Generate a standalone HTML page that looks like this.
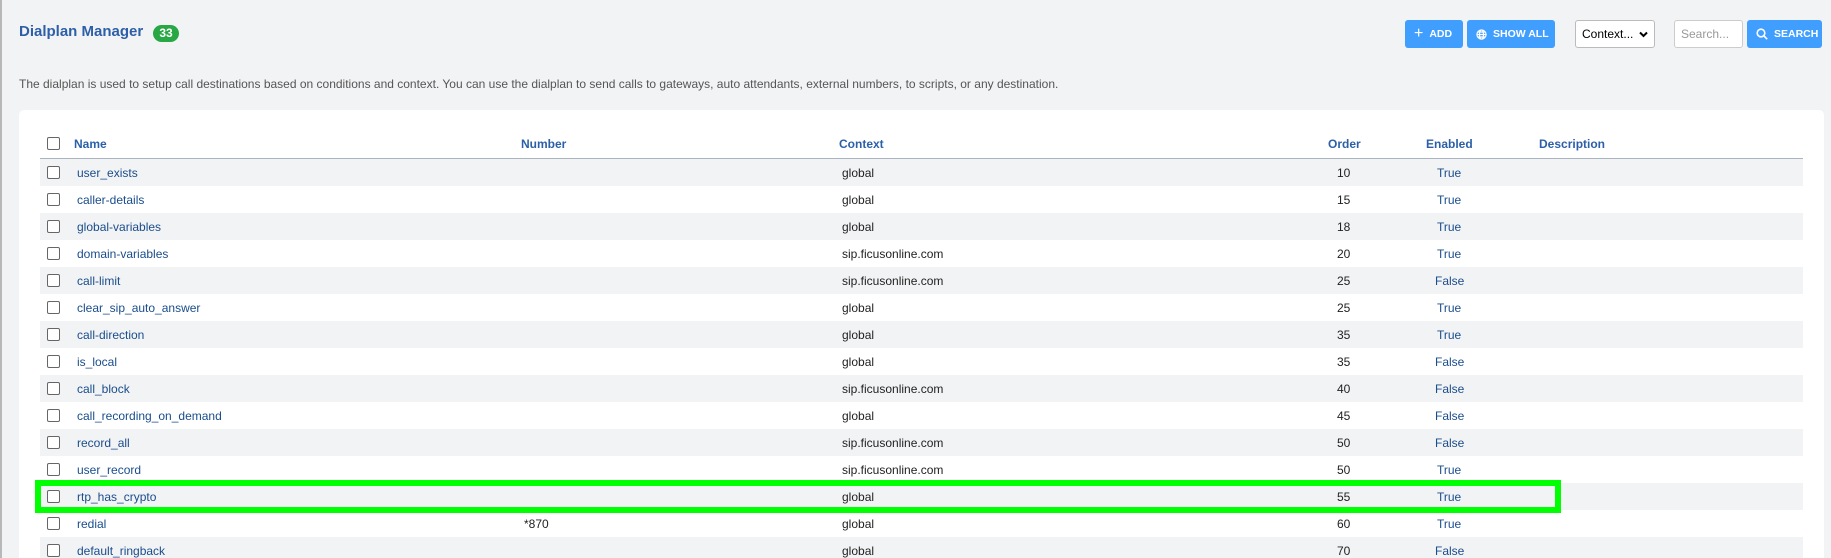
<!DOCTYPE html>
<html style="overflow:hidden;height:558px"><head><meta charset="utf-8"><style>
*{box-sizing:border-box;margin:0;padding:0}
body{width:1831px;height:558px;overflow:hidden;background:#f2f3f5;font-family:"Liberation Sans",sans-serif;position:relative}
.lb{position:absolute;left:0;top:0;width:2px;height:558px;background:#b8b8b8}
.title{position:absolute;left:19px;top:23px;font-size:15px;font-weight:bold;color:#2c5fa8}
.badge{position:absolute;left:153px;top:25px;width:26px;height:17px;border-radius:9px;background:#28a745;color:#fff;font-size:12px;font-weight:bold;text-align:center;line-height:17px}
.desc{position:absolute;left:19px;top:77px;font-size:12px;color:#555}
.btn{position:absolute;top:20px;height:28px;background:#409eff;border-radius:3px;color:#fff;font-size:10.5px;font-weight:bold;line-height:28px;display:flex;align-items:center;gap:6px;padding-left:9px}
.sel{position:absolute;left:1575px;top:20px;width:80px;height:28px;border:1px solid #bbb;border-radius:3px;background:#fff;font-size:12px;line-height:26px;padding-left:6px;color:#000}
.inp{position:absolute;left:1674px;top:20px;width:69px;height:28px;border:1px solid #ccc;border-radius:3px;background:#fff;font-size:12px;line-height:26px;padding-left:6px;color:#999}
.card{position:absolute;left:19px;top:110px;width:1805px;height:448px;background:#fff;border-radius:5px 5px 0 0}
.row{position:absolute;left:40px;width:1763px;height:27px;font-size:12px;color:#1a4d8c}
.row.s{background:#f2f3f5}
.row span{position:absolute;top:7px}
.cb{position:absolute;left:7px;top:7px;width:13px;height:13px;border:1px solid #666;border-radius:2px;background:#fff}
.hd{position:absolute;top:137px;font-size:12px;font-weight:bold;color:#2c5fa8}
.g{position:absolute;left:35px;top:480px;width:1526px;height:33px;border:6px solid #00ff00}
.blk{color:#222}
</style></head><body>
<div class="lb"></div>
<div class="title">Dialplan Manager</div>
<div class="badge">33</div>
<div class="btn" style="left:1405px;width:58px"><span style="font-size:16px;font-weight:normal">+</span>ADD</div>
<div class="btn" style="left:1467px;width:88px"><svg width="11" height="11" viewBox="0 0 12 12" fill="none" stroke="#fff" stroke-width="1.3"><circle cx="6" cy="6" r="5"/><ellipse cx="6" cy="6" rx="2.2" ry="5"/><path d="M1 6h10M2 3.3h8M2 8.7h8"/></svg>SHOW ALL</div>
<div class="sel">Context... <svg style="position:absolute;right:6px;top:10px" width="9" height="7" viewBox="0 0 9 7" fill="none" stroke="#000" stroke-width="2"><path d="M1 1.5l3.5 3.5 3.5-3.5"/></svg></div>
<div class="inp">Search...</div>
<div class="btn" style="left:1747px;width:75px"><svg width="12" height="12" viewBox="0 0 12 12" fill="none" stroke="#fff" stroke-width="1.6"><circle cx="5" cy="5" r="3.8"/><path d="M8 8l3.2 3.2"/></svg>SEARCH</div>
<div class="desc">The dialplan is used to setup call destinations based on conditions and context. You can use the dialplan to send calls to gateways, auto attendants, external numbers, to scripts, or any destination.</div>
<div class="card"></div>
<div class="cb" style="left:47px;top:137px"></div>
<div class="hd" style="left:74px">Name</div>
<div class="hd" style="left:521px">Number</div>
<div class="hd" style="left:839px">Context</div>
<div class="hd" style="left:1328px">Order</div>
<div class="hd" style="left:1426px">Enabled</div>
<div class="hd" style="left:1539px">Description</div>
<div style="position:absolute;left:40px;top:158px;width:1763px;height:1px;background:#aab3c0"></div>
<div class="row s" style="top:159px"><div class="cb"></div><span style="left:37px">user_exists</span><span class="blk" style="left:802px">global</span><span class="blk" style="left:1297px">10</span><span style="left:1397px">True</span></div>
<div class="row" style="top:186px"><div class="cb"></div><span style="left:37px">caller-details</span><span class="blk" style="left:802px">global</span><span class="blk" style="left:1297px">15</span><span style="left:1397px">True</span></div>
<div class="row s" style="top:213px"><div class="cb"></div><span style="left:37px">global-variables</span><span class="blk" style="left:802px">global</span><span class="blk" style="left:1297px">18</span><span style="left:1397px">True</span></div>
<div class="row" style="top:240px"><div class="cb"></div><span style="left:37px">domain-variables</span><span class="blk" style="left:802px">sip.ficusonline.com</span><span class="blk" style="left:1297px">20</span><span style="left:1397px">True</span></div>
<div class="row s" style="top:267px"><div class="cb"></div><span style="left:37px">call-limit</span><span class="blk" style="left:802px">sip.ficusonline.com</span><span class="blk" style="left:1297px">25</span><span style="left:1395px">False</span></div>
<div class="row" style="top:294px"><div class="cb"></div><span style="left:37px">clear_sip_auto_answer</span><span class="blk" style="left:802px">global</span><span class="blk" style="left:1297px">25</span><span style="left:1397px">True</span></div>
<div class="row s" style="top:321px"><div class="cb"></div><span style="left:37px">call-direction</span><span class="blk" style="left:802px">global</span><span class="blk" style="left:1297px">35</span><span style="left:1397px">True</span></div>
<div class="row" style="top:348px"><div class="cb"></div><span style="left:37px">is_local</span><span class="blk" style="left:802px">global</span><span class="blk" style="left:1297px">35</span><span style="left:1395px">False</span></div>
<div class="row s" style="top:375px"><div class="cb"></div><span style="left:37px">call_block</span><span class="blk" style="left:802px">sip.ficusonline.com</span><span class="blk" style="left:1297px">40</span><span style="left:1395px">False</span></div>
<div class="row" style="top:402px"><div class="cb"></div><span style="left:37px">call_recording_on_demand</span><span class="blk" style="left:802px">global</span><span class="blk" style="left:1297px">45</span><span style="left:1395px">False</span></div>
<div class="row s" style="top:429px"><div class="cb"></div><span style="left:37px">record_all</span><span class="blk" style="left:802px">sip.ficusonline.com</span><span class="blk" style="left:1297px">50</span><span style="left:1395px">False</span></div>
<div class="row" style="top:456px"><div class="cb"></div><span style="left:37px">user_record</span><span class="blk" style="left:802px">sip.ficusonline.com</span><span class="blk" style="left:1297px">50</span><span style="left:1397px">True</span></div>
<div class="row s" style="top:483px"><div class="cb"></div><span style="left:37px">rtp_has_crypto</span><span class="blk" style="left:802px">global</span><span class="blk" style="left:1297px">55</span><span style="left:1397px">True</span></div>
<div class="row" style="top:510px"><div class="cb"></div><span style="left:37px">redial</span><span class="blk" style="left:484px">*870</span><span class="blk" style="left:802px">global</span><span class="blk" style="left:1297px">60</span><span style="left:1397px">True</span></div>
<div class="row s" style="top:537px;height:21px"><div class="cb"></div><span style="left:37px">default_ringback</span><span class="blk" style="left:802px">global</span><span class="blk" style="left:1297px">70</span><span style="left:1395px">False</span></div>
<div class="g"></div>
</body></html>
